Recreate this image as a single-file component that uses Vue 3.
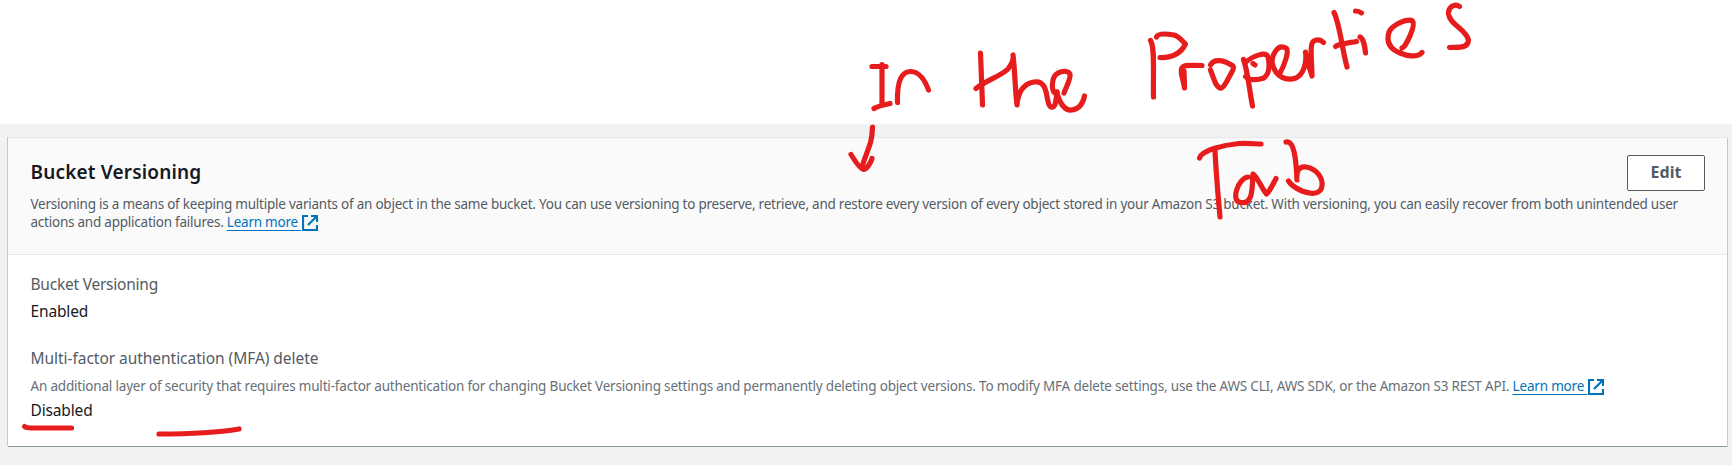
<script setup>
const strokes = [
  // "In"
  'M872 66.5 L886 66.5', 'M882 64.5 L882 104', 'M874 108.5 Q878 106 890 103.500',
  'M897.500 102.500 C897 86 899 72 910 71.500 C920 71 926 83 928.500 90',
  // arrow
  'M872.500 127 C872 145 868 147 862 167', 'M851 154.500 C855 161 860 169 863.500 169.500 C867 169.500 871 162 872 158.500',
  // "the"
  'M980.500 53 L982.500 105', 'M976 88.500 C985 81 1001 76 1008 69 C1012 64 1014 60 1013 55 C1015 70 1015 90 1017 105 C1018 93 1022 84 1034 82 C1050 79 1045 105 1051 107 C1056 109 1056 98 1057 92',
  'M1064 93 C1066 87 1071 79 1070 74 C1067 69 1055 71 1053 80 C1052 85 1052 91 1055 93', 'M1057 92 C1059 103 1065 111 1072 110 C1080 109 1083 103 1084.500 96',
  // "Properties"
  'M1150.500 40.500 C1155 47 1153 70 1153.500 97', 'M1156.500 37 C1158 33 1168 34 1174 35 C1180 37 1183 42 1185.500 44 C1181 53 1172 58 1160 57.500',
  'M1202 65.500 C1190 65.500 1183 64 1181.500 69 C1180 74 1184 81 1184.500 88', 'M1184 71 L1184.500 86',
  'M1210.500 65 C1214 58 1224 60 1233 66 C1235 68 1230 75 1227 81 C1222 90 1220 90 1216 84 C1214 80 1212 74 1210.500 70',
  'M1243.500 59.500 C1248 72 1249 88 1252.500 106', 'M1245 63 C1252 56 1266 51 1268 57 C1270 66 1269 74 1264 78 C1258 80 1249 81 1245.500 76.500', 'M1253 63.500 L1255 65',
  'M1280 73 C1284 66 1290 50 1286 48 C1277 43 1272 56 1272 62 C1275 78 1287 81 1296 78 C1304 74 1307 62 1305.500 52 C1307 62 1310 69 1312 76 C1312 63 1309 43 1314 41 C1318 39 1321 40 1323.500 42.500',
  'M1334 12.500 C1340 25 1342 49 1347 67', 'M1335.500 46.500 C1338 44 1348 43 1356.500 41.500', 'M1355.500 11 Q1359 11 1361.500 13',
  'M1360 37 C1363 38 1365 47 1365.500 53',
  'M1402 48 C1406 47 1416 25 1412.500 21 C1408 18 1393 24 1389 32 C1386 42 1390 49 1400 53 C1407 56 1417 58 1422 52.500',
  'M1459.500 6.500 C1455 3 1448 7 1448.500 14 C1450 25 1466 29 1468.500 40 C1468 48 1461 47 1449.500 47.500',
  // "Tab"
  'M1199.500 158 C1202 150 1224 145 1239 143.500 C1248 143 1256 144 1261 144', 'M1215 151 C1216 171 1218 195 1220 217',
  'M1248 177 C1238 178 1230 202 1241 202.500 C1254 205 1252 184 1253 174 C1257 176 1263 191 1266.500 194 C1270 191 1273 184 1276 178.500',
  'M1286 142 C1294 140 1296 158 1297 180 C1296 171 1299 166 1306 167 C1317 169 1323 178 1322 186 C1321 194 1312 195 1302 191 C1295 188 1291 185 1288.500 181',
  // underlines
  'M24.500 426.500 Q26 428 32 428 L71.500 428', 'M159 434 C190 434 215 433 239 429',
]
</script>

<template>
  <main class="page">
    <section class="card">
      <header class="head">
        <div class="intro">
          <h2>Bucket Versioning</h2>
          <p class="desc">
            <span class="line">Versioning is a means of keeping multiple variants of an object in the same bucket. You can use versioning to preserve, retrieve, and restore every version of every object stored in your Amazon S3 bucket. With versioning, you can easily recover from both unintended user</span>
            <span class="line">actions and application failures. <a>Learn more&nbsp;</a><svg class="ext" viewBox="0 0 16 16"><path d="M6 1H1V15H15V10M9 1H15V7M15 1L6 10" /></svg></span>
          </p>
        </div>
        <button>Edit</button>
      </header>
      <div class="body">
        <div class="label">Bucket Versioning</div>
        <div class="value enabled">Enabled</div>
        <div class="label mfa">Multi-factor authentication (MFA) delete</div>
        <div class="hint line">An additional layer of security that requires multi-factor authentication for changing Bucket Versioning settings and permanently deleting object versions. To modify MFA delete settings, use the AWS CLI, AWS SDK, or the Amazon S3 REST API. <a>Learn more&nbsp;</a><svg class="ext" viewBox="0 0 16 16"><path d="M6 1H1V15H15V10M9 1H15V7M15 1L6 10" /></svg></div>
        <div class="value disabled">Disabled</div>
      </div>
    </section>
    <svg class="ink" viewBox="0 0 1732 465"><path v-for="(d, i) in strokes" :key="i" :d="d" /></svg>
  </main>
</template>

<style>
body { margin: 0; background: #fff; }
</style>
<style scoped>
.page { position: relative; box-sizing: border-box; width: 1732px; height: 465px; padding: 137px 5px 18px 8px; background: linear-gradient(#fff 124px, #f1f3f3 124px); font-family: "Noto Sans", sans-serif; overflow: hidden; }
.card { box-sizing: border-box; height: 309px; background: #fff; border-top: 1px solid #e6e9e9; box-shadow: 0 1px 0 #879596, -1px 0 0 #c4c9c9, 1px 1px 0 #c4c9c9; }
.head { box-sizing: border-box; display: flex; justify-content: space-between; align-items: flex-start; height: 117px; padding: 17px 22px 0 22.5px; background: #fafafa; border-bottom: 1px solid #e4e9e9; }
.intro { width: 1596px; }
h2 { margin: 3px 0 0; font-size: 19px; line-height: 28px; font-weight: 600; letter-spacing: 0.16px; color: #16191f; white-space: nowrap; }
.desc { margin: 9px 0 0; font-size: 13.5px; line-height: 18px; letter-spacing: -0.233px; color: #545b64; }
.line { display: block; white-space: nowrap; }
a { color: #0073bb; text-decoration: underline 1px; text-underline-offset: 3px; }
.ext { width: 16px; height: 16px; margin-left: 1px; vertical-align: -4px; fill: none; stroke: #0073bb; stroke-width: 2.2; }
button { flex: none; width: 78px; height: 36px; padding: 0 0 2px; border: 1px solid #545b64; border-radius: 2px; background: #fff; font: 700 16px/32px "Noto Sans", sans-serif; color: #545b64; }
.body { padding: 17px 0 0 22.5px; }
.label { font-size: 15.5px; line-height: 24px; letter-spacing: -0.23px; color: #545b64; }
.value { font-size: 15.5px; line-height: 24px; letter-spacing: -0.15px; color: #16191f; }
.enabled { margin-top: 3px; }
.mfa { margin-top: 23px; letter-spacing: -0.04px; }
.hint { margin-top: 7px; font-size: 13.5px; line-height: 18px; letter-spacing: -0.187px; color: #687078; }
.disabled { margin-top: 3px; }
.ink { position: absolute; left: 0; top: 0; width: 1732px; height: 465px; fill: none; stroke: #e71d1d; stroke-width: 5.2; stroke-linecap: round; stroke-linejoin: round; pointer-events: none; }
</style>
